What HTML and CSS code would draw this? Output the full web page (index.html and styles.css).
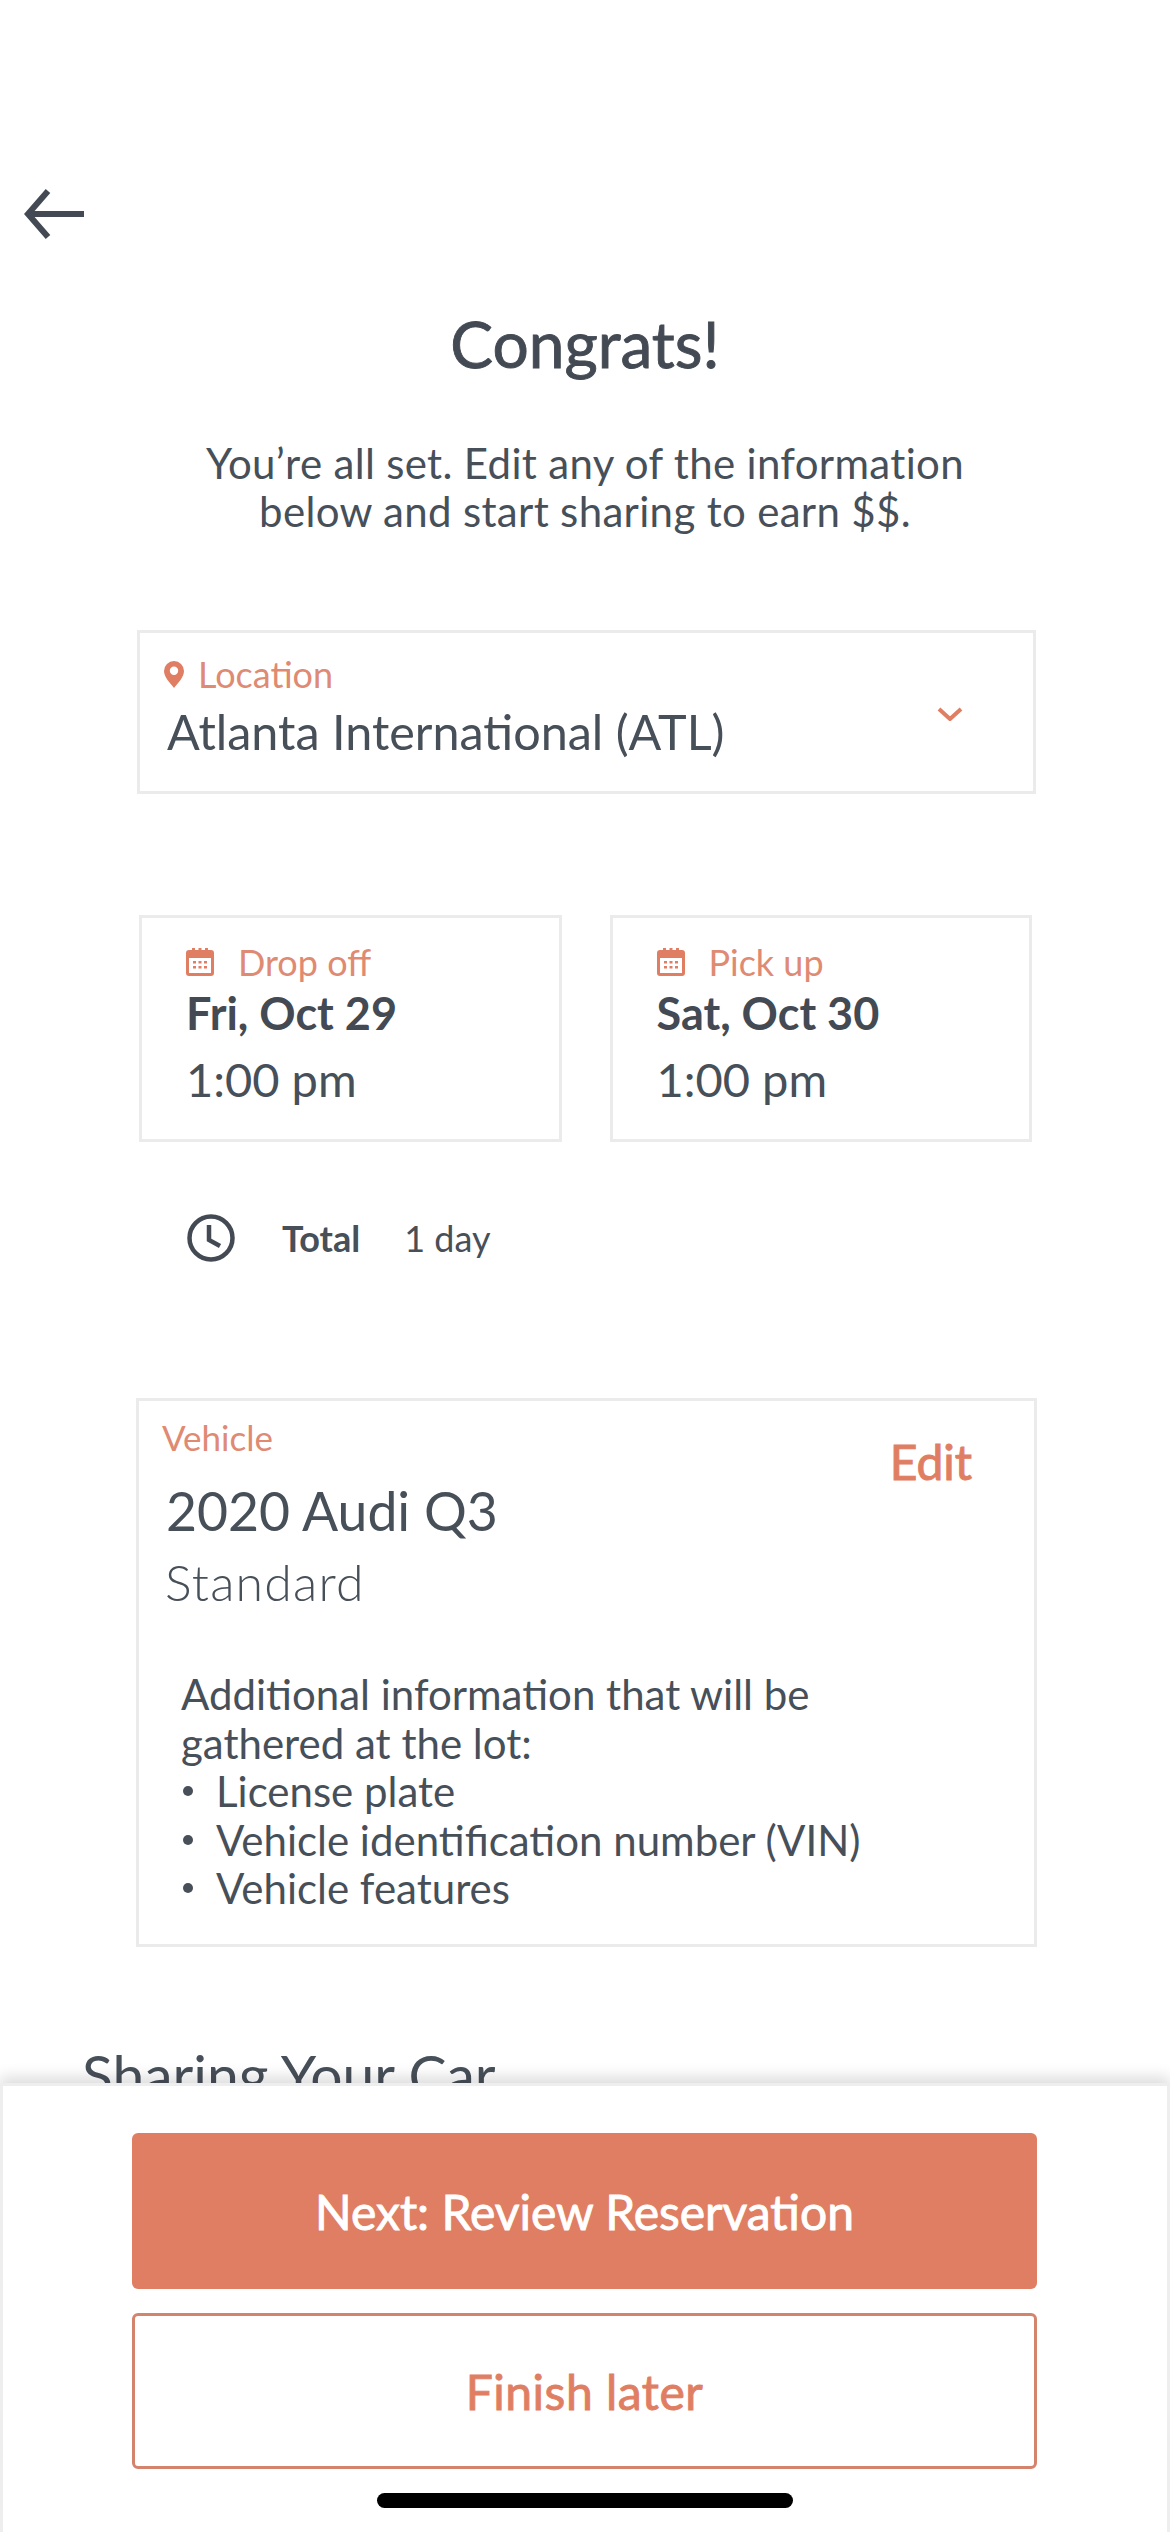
FILE: index.html
```html
<!DOCTYPE html>
<html>
	<head>
		<meta name="viewport" content="width=device-width, initial-scale=1.0">
		<title>Congrats</title>
		<link rel="stylesheet" href="styles.css">
	</head>
	<body>
	<div class="screen">
		<div class="content">
			<div class="back_row">
				<svg class="back_icon" viewBox="0 0 60 52" width="60" height="52"><path d="M60 26H4M24 3L4 26l20 23" fill="none" stroke="#434a53" stroke-width="6"/></svg>
			</div>
			<h1 class="title">Congrats!</h1>
			<p class="subtitle">You’re all set. Edit any of the information<br>below and start sharing to earn $$.</p>

			<div class="card location_card">
				<div class="location_text">
					<div class="label">
						<svg width="20" height="27" viewBox="0 0 20 27"><path d="M10 0a10 10 0 0 0-10 10c0 6 6 12 10 17 4-5 10-11 10-17a10 10 0 0 0-10-10zm0 14a4.200 4.200 0 1 1 0-8.400 4.200 4.200 0 0 1 0 8.400z" fill="#e07e63"/></svg>
						<span>Location</span>
					</div>
					<div class="location_name">Atlanta International (ATL)</div>
				</div>
				<svg class="chevron" width="26" height="14" viewBox="0 0 26 14"><path d="M2 2l11 10L24 2" fill="none" stroke="#e07e63" stroke-width="4"/></svg>
			</div>

			<div class="date_row">
				<div class="card date_card">
					<div class="label date_label">
						<svg width="28" height="28" viewBox="0 0 28 28"><use href="#cal"/></svg>
						<span>Drop off</span>
					</div>
					<div class="date_day">Fri, Oct 29</div>
					<div class="date_time">1:00 pm</div>
				</div>
				<div class="card date_card">
					<div class="label date_label">
						<svg width="28" height="28" viewBox="0 0 28 28"><use href="#cal"/></svg>
						<span>Pick up</span>
					</div>
					<div class="date_day">Sat, Oct 30</div>
					<div class="date_time">1:00 pm</div>
				</div>
			</div>

			<div class="total_row">
				<svg width="48" height="48" viewBox="0 0 48 48"><circle cx="24" cy="24" r="21.500" fill="none" stroke="#434a53" stroke-width="4.500"/><path d="M22 11v15l11 6" fill="none" stroke="#434a53" stroke-width="4.500"/></svg>
				<span class="total_label">Total</span>
				<span class="total_value">1 day</span>
			</div>

			<div class="card vehicle_card">
				<div class="vehicle_head">
					<div>
						<div class="vehicle_label">Vehicle</div>
						<div class="vehicle_name">2020 Audi Q3</div>
						<div class="vehicle_type">Standard</div>
					</div>
					<a class="edit_link">Edit</a>
				</div>
				<p class="vehicle_info">Additional information that will be<br>gathered at the lot:</p>
				<ul class="vehicle_list">
					<li>License plate</li>
					<li>Vehicle identification number (VIN)</li>
					<li>Vehicle features</li>
				</ul>
			</div>

			<h2 class="section_title">Sharing Your Car</h2>
		</div>

		<div class="footer">
			<button type="button" class="btn btn_primary">Next: Review Reservation</button>
			<button type="button" class="btn btn_outline">Finish later</button>
			<div class="home_bar"></div>
		</div>
	</div>

	<svg width="0" height="0" class="defs">
		<symbol id="cal" viewBox="0 0 28 28">
			<path d="M3 2h3V0h3v2h3.500V0h3v2H19V0h3v2h3a3 3 0 0 1 3 3v20a3 3 0 0 1-3 3H3a3 3 0 0 1-3-3V5a3 3 0 0 1 3-3zm0 8v15h22V10z" fill="#e07e63" fill-rule="evenodd"/>
			<path d="M7 13h3v2.500H7zM12.500 13h3v2.500h-3zM18 13h3v2.500h-3zM7 18h3v2.500H7zM12.500 18h3v2.500h-3zM18 18h3v2.500h-3z" fill="#e07e63"/>
		</symbol>
	</svg>
	</body>
</html>
```

FILE: styles.css
```css
*
{
	box-sizing: border-box;
}
html,body
{
	margin: 0;
	padding: 0;
	background: #fff;
}
body
{
	font-family: "Lato", "Liberation Sans", sans-serif;
	color: #474f59;
}
.defs
{
	display: block;
	height: 0;
}
.screen
{
	width: 1170px;
	height: 2532px;
	display: flex;
	flex-direction: column;
	overflow: hidden;
}
.content
{
	flex: 1;
	min-height: 0;
	overflow: hidden;
}
.back_row
{
	padding: 188px 0 0 24px;
	height: 240px;
}
.back_icon
{
	display: block;
}
.title
{
	margin: 69px 0 0 0;
	font-size: 64px;
	line-height: 70px;
	font-weight: 400;
	-webkit-text-stroke: 0.9px #434a53;
	text-align: center;
	color: #434a53;
}
.subtitle
{
	margin: 60px 0 0 0;
	font-size: 42px;
	line-height: 48px;
	letter-spacing: 0.33px;
	text-align: center;
}
.card
{
	border: 3px solid #ebebeb;
	background: #fff;
}
.label
{
	display: flex;
	align-items: center;
	font-size: 36px;
	line-height: 40px;
	color: #df8a73;
}
.location_card
{
	margin: 95px 134px 0 137px;
	height: 164px;
	padding: 21px 70px 0 24px;
	display: flex;
	justify-content: space-between;
	align-items: flex-start;
}
.location_text .label
{
	gap: 14px;
}
.location_name
{
	margin-top: 9px;
	padding-left: 3px;
	font-size: 48.500px;
	line-height: 56px;
}
.chevron
{
	margin-top: 53px;
}
.date_row
{
	margin: 121px 138px 0 139px;
	display: flex;
	gap: 48px;
}
.date_card
{
	flex: 1;
	height: 227px;
	padding: 24px 0 0 44px;
}
.date_label
{
	gap: 24px;
}
.date_day
{
	margin-top: 5px;
	font-size: 45px;
	line-height: 52px;
	font-weight: 700;
	color: #434a53;
}
.date_time
{
	margin-top: 12px;
	font-size: 47px;
	line-height: 56px;
}
.total_row
{
	margin: 72px 0 0 187px;
	height: 48px;
	display: flex;
	align-items: center;
	font-size: 36px;
}
.total_label
{
	margin-left: 47px;
	font-weight: 700;
}
.total_value
{
	margin-left: 44px;
}
.vehicle_card
{
	margin: 136px 133px 0 136px;
	height: 549px;
	padding: 16px 0 0 23px;
}
.vehicle_head
{
	display: flex;
	justify-content: space-between;
	align-items: flex-start;
	padding-right: 62px;
}
.vehicle_label
{
	font-size: 35px;
	line-height: 40px;
	color: #df8a73;
}
.vehicle_name
{
	margin-top: 20px;
	padding-left: 4px;
	font-size: 53.500px;
	line-height: 66px;
}
.vehicle_type
{
	margin-top: 11px;
	padding-left: 3px;
	font-size: 50px;
	line-height: 56px;
	letter-spacing: 1.2px;
	font-weight: 300;
}
.edit_link
{
	margin-top: 23px;
	font-size: 48px;
	line-height: 44px;
	font-weight: 400;
	-webkit-text-stroke: 1px #e07e63;
	color: #e07e63;
}
.vehicle_info
{
	margin: 60px 0 0 19px;
	font-size: 42px;
	line-height: 48.500px;
}
.vehicle_list
{
	margin: 0 0 0 19px;
	padding: 0;
	list-style: none;
	font-size: 42px;
	line-height: 48.500px;
}
.vehicle_list li
{
	display: flex;
	align-items: center;
	padding-left: 35px;
}
.vehicle_list li::before
{
	content: "";
	width: 10px;
	height: 10px;
	border-radius: 50%;
	background: #474f59;
	margin-left: -33px;
	margin-right: 23px;
}
.section_title
{
	margin: 94px 0 0 82px;
	font-size: 57px;
	line-height: 66px;
	font-weight: 400;
	white-space: nowrap;
}
.footer
{
	position: relative;
	height: 449px;
	padding: 47px 130px 0 129px;
	background: #fff;
	border: 3px solid #eeeeee;
	border-bottom: none;
	box-shadow: 0 -6px 14px rgba(0,0,0,0.14);
	display: flex;
	flex-direction: column;
}
.btn
{
	display: block;
	width: 100%;
	height: 156px;
	border-radius: 6px;
	font-family: inherit;
	font-size: 48px;
	font-weight: 400;
}
.btn_primary
{
	background-color: #e07e63;
	border: none;
	color: #fff;
	-webkit-text-stroke: 0.9px #fff;
}
.btn_outline
{
	margin-top: 24px;
	background-color: #fff;
	border: 3px solid #d4836d;
	color: #e07e63;
	letter-spacing: 0.5px;
	-webkit-text-stroke: 0.9px #e07e63;
}
.home_bar
{
	width: 416px;
	height: 15px;
	margin: 24px auto 0 auto;
	border-radius: 8px;
	background: #000;
}
```
